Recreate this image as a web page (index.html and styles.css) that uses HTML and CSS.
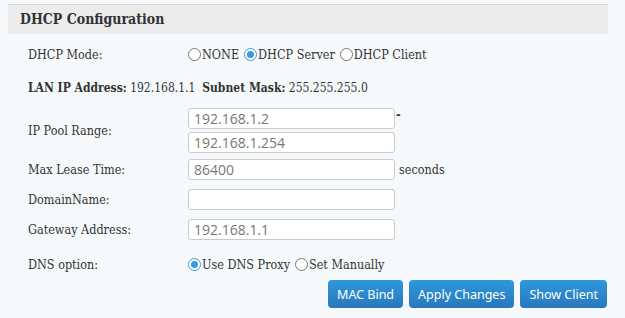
FILE: index.html
```html
<!DOCTYPE html>
<html lang="en">
<head>
    <meta charset="UTF-8">
    <title>DHCP Configuration</title>
    <link rel="stylesheet" href="styles.css">
</head>
<body>
    <div class="panel">
        <div class="panel-head">DHCP Configuration</div>

        <div class="form">
            <div class="row row-mode">
                <div class="label">DHCP Mode:</div>
                <div class="field">
                    <label class="radio"><span class="dot"></span>NONE</label>
                    <label class="radio"><span class="dot on"></span>DHCP Server</label>
                    <label class="radio"><span class="dot"></span>DHCP Client</label>
                </div>
            </div>

            <div class="lan-info">
                <b>LAN IP Address:</b> 192.168.1.1 &nbsp;<b>Subnet Mask:</b> 255.255.255.0
            </div>

            <div class="row row-pool">
                <div class="label">IP Pool Range:</div>
                <div class="field pool">
                    <div class="pool-line">
                        <input type="text" value="192.168.1.2"><span class="dash">-</span>
                    </div>
                    <input type="text" value="192.168.1.254">
                </div>
            </div>

            <div class="row row-input first">
                <div class="label">Max Lease Time:</div>
                <div class="field"><input type="text" value="86400"><span class="unit">seconds</span></div>
            </div>

            <div class="row row-input">
                <div class="label">DomainName:</div>
                <div class="field"><input type="text" value=""></div>
            </div>

            <div class="row row-input">
                <div class="label">Gateway Address:</div>
                <div class="field"><input type="text" value="192.168.1.1"></div>
            </div>

            <div class="row row-dns">
                <div class="label">DNS option:</div>
                <div class="field">
                    <label class="radio"><span class="dot on"></span>Use DNS Proxy</label>
                    <label class="radio"><span class="dot"></span>Set Manually</label>
                </div>
            </div>

            <div class="actions">
                <button type="button">MAC Bind</button>
                <button type="button">Apply Changes</button>
                <button type="button">Show Client</button>
            </div>
        </div>
    </div>
</body>
</html>
```

FILE: styles.css
```css
body {
    margin: 0;
    padding: 4px 0 0 8px;
    background-color: #f5f9fc;
    font-family: "DejaVu Serif Condensed", "DejaVu Serif", serif;
    font-size: 12.5px;
    color: #333;
}
.panel {
    width: 600px;
}
.panel-head {
    height: 29px;
    line-height: 29px;
    border-top: 1px solid #d4d4d4;
    background-color: #ececec;
    padding-left: 12px;
    font-size: 14px;
    font-weight: bold;
    color: #333;
}
.form {
    padding-left: 20px;
}
.row {
    display: grid;
    grid-template-columns: 160px auto;
    align-items: center;
}
.row-mode {
    height: 24px;
    margin-top: 8px;
}
.lan-info {
    margin-top: 13px;
    height: 18px;
    line-height: 18px;
    font-size: 12px;
}
.row-pool {
    margin-top: 11px;
}
.row-input {
    margin-top: 9px;
}
.row-input.first {
    margin-top: 6px;
}
.row-dns {
    margin-top: 14px;
    height: 20px;
}
.field {
    display: flex;
    align-items: center;
}
.pool {
    flex-direction: column;
    align-items: flex-start;
    gap: 3px;
}
.pool-line {
    display: flex;
    align-items: flex-start;
}
.dash {
    font-weight: bold;
    line-height: 14px;
    margin-left: 1px;
}
.unit {
    margin-left: 4px;
}
input {
    width: 207px;
    height: 21px;
    box-sizing: border-box;
    border: 1px solid #cbcbcb;
    border-radius: 3px;
    background: #fff;
    padding: 0 5px;
    font-family: "Open Sans", sans-serif;
    font-size: 14px;
    color: #777;
}
.radio {
    display: flex;
    align-items: center;
    margin-right: 5px;
}
.dot {
    width: 11px;
    height: 11px;
    border: 1px solid #777;
    border-radius: 50%;
    background: #fff;
    margin-right: 1px;
    position: relative;
}
.dot.on {
    border-color: #3b99e0;
}
.dot.on::after {
    content: "";
    position: absolute;
    left: 2px;
    top: 2px;
    width: 7px;
    height: 7px;
    border-radius: 50%;
    background: #3b99e0;
}
.actions {
    display: flex;
    justify-content: flex-end;
    gap: 6px;
    margin-top: 6px;
    padding-right: 1px;
}
button {
    height: 28px;
    border: none;
    border-radius: 4px;
    padding: 0 9px;
    background: linear-gradient(#2f98dc, #2878bb);
    color: #fff;
    font-family: "Noto Sans", sans-serif;
    font-size: 12.5px;
    cursor: pointer;
}
```
